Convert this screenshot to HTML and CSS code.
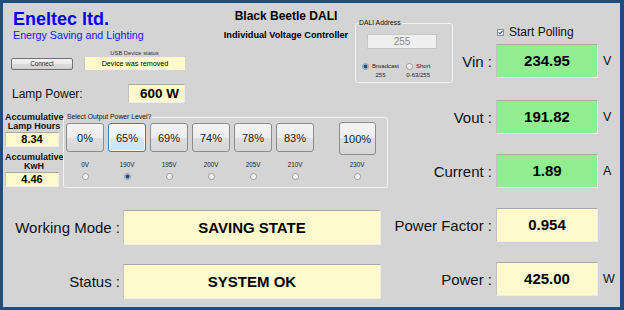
FILE: index.html
```html
<!DOCTYPE html>
<html>
<head>
<meta charset="utf-8">
<link rel="stylesheet" href="styles.css">
</head>
<body>
<div class="frame">
  <div class="top">
    <div class="brand">
      <div class="brand-name">Eneltec ltd.</div>
      <div class="brand-sub">Energy Saving and Lighting</div>
      <div class="usb-row">
        <button class="btn-connect">Connect</button>
        <div class="usb">
          <div class="usb-label">USB Device status</div>
          <div class="usb-box">Device was removed</div>
        </div>
      </div>
    </div>
    <div class="title">
      <div class="title-main">Black Beetle DALI</div>
      <div class="title-sub">Individual Voltage Controller</div>
    </div>
    <fieldset class="dali">
      <legend>DALI Address</legend>
      <div class="dali-input">255</div>
      <div class="dali-opts">
        <div class="opt opt-b">
          <div class="opt-line"><span class="radio checked"></span><span>Broadcast</span></div>
          <div class="opt-sub">255</div>
        </div>
        <div class="opt opt-s">
          <div class="opt-line"><span class="radio"></span><span>Short</span></div>
          <div class="opt-sub">0-63/255</div>
        </div>
      </div>
    </fieldset>
    <div class="top-right">
      <div class="polling">
        <span class="check"><svg width="5" height="5" viewBox="0 0 5 5"><path d="M0.5 2.3 L2 3.8 L4.6 0.8" fill="none" stroke="#2b4f8f" stroke-width="1.1"/></svg></span>
        <span>Start Polling</span>
      </div>
      <div class="meas">
        <span class="m-label">Vin :</span>
        <div class="vbox green">234.95</div>
        <span class="unit">V</span>
      </div>
    </div>
  </div>

  <div class="main">
    <div class="left">
      <div class="lamp">
        <span class="lamp-label">Lamp Power:</span>
        <div class="vbox yellow lamp-box">600 W</div>
      </div>
      <div class="mid">
        <div class="accum">
          <div class="acc-title">Accumulative<br>Lamp Hours</div>
          <div class="vbox yellow acc-box">8.34</div>
          <div class="acc-title acc-second">Accumulative<br>KwH</div>
          <div class="vbox yellow acc-box">4.46</div>
        </div>
        <fieldset class="power">
          <legend>Select Output Power Level?</legend>
          <div class="levels">
            <div class="lvl"><button class="pbtn">0%</button><span class="volt">0V</span><span class="radio"></span></div>
            <div class="lvl"><button class="pbtn focus">65%</button><span class="volt">190V</span><span class="radio checked"></span></div>
            <div class="lvl"><button class="pbtn">69%</button><span class="volt">195V</span><span class="radio"></span></div>
            <div class="lvl"><button class="pbtn">74%</button><span class="volt">200V</span><span class="radio"></span></div>
            <div class="lvl"><button class="pbtn">78%</button><span class="volt">205V</span><span class="radio"></span></div>
            <div class="lvl"><button class="pbtn">83%</button><span class="volt">210V</span><span class="radio"></span></div>
            <div class="lvl lvl-max"><button class="pbtn big">100%</button><span class="volt">230V</span><span class="radio"></span></div>
          </div>
        </fieldset>
      </div>
      <div class="mode first">
        <span class="mode-label">Working Mode :</span>
        <div class="vbox yellow mode-box">SAVING STATE</div>
      </div>
      <div class="mode">
        <span class="mode-label">Status :</span>
        <div class="vbox yellow mode-box">SYSTEM OK</div>
      </div>
    </div>

    <div class="right">
      <div class="meas">
        <span class="m-label">Vout :</span>
        <div class="vbox green">191.82</div>
        <span class="unit">V</span>
      </div>
      <div class="meas">
        <span class="m-label">Current :</span>
        <div class="vbox green">1.89</div>
        <span class="unit">A</span>
      </div>
      <div class="meas">
        <span class="m-label">Power Factor :</span>
        <div class="vbox yellow">0.954</div>
        <span class="unit"></span>
      </div>
      <div class="meas">
        <span class="m-label">Power :</span>
        <div class="vbox yellow">425.00</div>
        <span class="unit">W</span>
      </div>
    </div>
  </div>
</div>
</body>
</html>
```

FILE: styles.css
```css
* { box-sizing: border-box; }

body {
  margin: 0;
  font-family: "Liberation Sans", Arial, sans-serif;
  color: #000;
}

.frame {
  width: 624px;
  height: 310px;
  background: #d4d4d4;
  border: 3px solid #1e4e7d;
  border-right-width: 4px;
  display: flex;
  flex-direction: column;
}

/* ---------- top band ---------- */
.top {
  height: 81px;
  display: flex;
  align-items: flex-start;
  flex-shrink: 0;
}

.brand {
  width: 200px;
  padding: 6px 0 0 10px;
}

.brand-name {
  font-size: 18px;
  font-weight: bold;
  line-height: 20px;
  color: #0000f2;
}

.brand-sub {
  font-size: 10.7px;
  line-height: 13px;
  color: #1414ff;
}

.usb-row {
  display: flex;
  align-items: flex-end;
  gap: 11px;
  margin: 8px 0 0 -2px;
}

.btn-connect {
  width: 62px;
  height: 12px;
  padding: 0;
  border: 1px solid #707070;
  border-radius: 2px;
  background: linear-gradient(#f3f3f3, #ebebeb 50%, #dddddd 50%, #cfcfcf);
  font-family: "Liberation Sans", Arial, sans-serif;
  font-size: 6.3px;
  line-height: 10px;
  color: #222;
}

.usb {
  width: 101px;
  display: flex;
  flex-direction: column;
  align-items: center;
}

.usb-label {
  font-size: 5.8px;
  line-height: 7px;
  color: #333;
}

.usb-box {
  width: 100%;
  height: 13px;
  background: #fffacd;
  border-left: 1px solid #c4c4c4;
  font-size: 7.2px;
  line-height: 13px;
  text-align: center;
}

.title {
  width: 152px;
  padding: 6px 0 0 14px;
  text-align: center;
}

.title-main {
  font-size: 12px;
  font-weight: bold;
  line-height: 14px;
}

.title-sub {
  font-size: 9.2px;
  font-weight: bold;
  line-height: 11px;
  margin-top: 6.5px;
}

/* group boxes */
fieldset {
  margin: 0;
  padding: 0;
  min-width: 0;
  border: 1px solid #f2f2f2;
  border-radius: 3px;
}

legend {
  padding: 0 1px;
  margin-left: 2px;
  font-size: 6.8px;
  line-height: 8px;
  color: #111;
}

.dali {
  width: 98px;
  margin-top: 16px;
  padding-bottom: 3px;
}

.dali-input {
  width: 70px;
  height: 15px;
  margin: 7px 0 0 11px;
  background: #efefef;
  border: 1px solid #c6c6c6;
  font-size: 10px;
  line-height: 13px;
  text-align: center;
  color: #8a8a8a;
}

.dali-opts {
  display: flex;
  gap: 7px;
  margin: 13px 0 0 6px;
}

.opt {
  display: flex;
  flex-direction: column;
  align-items: center;
  font-size: 6px;
  color: #222;
}

.opt-line {
  display: flex;
  align-items: center;
  gap: 3px;
  height: 8px;
}

.opt-sub {
  line-height: 8px;
  margin-top: 1px;
}

.top-right {
  flex: 1;
  padding-top: 22px;
}

.polling {
  display: flex;
  align-items: center;
  gap: 5px;
  padding-left: 44px;
  font-size: 12px;
  line-height: 14px;
  color: #111;
}

.check {
  width: 7px;
  height: 7px;
  border: 1px solid #8f8f8f;
  background: #f4f4f4;
  display: flex;
  align-items: center;
  justify-content: center;
}

.top-right .meas {
  margin-top: 5px;
}

/* measurement rows */
.meas {
  display: flex;
  align-items: center;
}

.m-label {
  flex: 1;
  text-align: right;
  padding-right: 4px;
  font-size: 15px;
  white-space: nowrap;
  color: #111;
}

.vbox {
  border-top: 1px solid #a9a9a9;
  border-left: 1px solid #c2c2c2;
  border-right: 1px solid #ececec;
  border-bottom: 1px solid #ececec;
  font-weight: bold;
  text-align: center;
  color: #000;
}

.meas .vbox {
  width: 102px;
  height: 34px;
  line-height: 32px;
  font-size: 15px;
}

.green { background: #90ee90; }
.yellow { background: #fffacd; }

.unit {
  width: 22px;
  padding-left: 5px;
  font-size: 12.5px;
  color: #111;
}

/* ---------- main band ---------- */
.main {
  flex: 1;
  display: flex;
}

.left {
  width: 387px;
}

.right {
  flex: 1;
  padding-top: 16px;
  display: flex;
  flex-direction: column;
  gap: 20px;
}

.lamp {
  height: 19px;
  display: flex;
  align-items: center;
  padding-left: 9px;
}

.lamp-label {
  width: 116px;
  font-size: 12px;
  color: #111;
}

.lamp-box {
  width: 57px;
  height: 19px;
  font-size: 13.5px;
  line-height: 17px;
  padding-left: 6px;
}

.mid {
  display: flex;
  align-items: flex-start;
  margin-top: 10px;
}

.accum {
  width: 54px;
  margin-left: 2px;
  text-align: center;
}

.acc-title {
  font-size: 9px;
  font-weight: bold;
  line-height: 9px;
  color: #111;
  margin-right: -4px;
}

.acc-second {
  margin-top: 5.5px;
}

.acc-box {
  height: 15px;
  margin-top: 1px;
  font-size: 11px;
  line-height: 13px;
}

.power {
  width: 325px;
  margin-left: 4px;
  padding-bottom: 7px;
}

.levels {
  display: flex;
  margin-top: 1px;
}

.lvl {
  width: 42px;
  display: flex;
  flex-direction: column;
  align-items: center;
}

.lvl-max {
  margin-left: 20px;
}

.pbtn {
  width: 38px;
  height: 29px;
  margin: 1px 0 3px;
  padding: 0;
  border: 1px solid #8c8c8c;
  border-radius: 3px;
  background: linear-gradient(#f4f4f4, #ececec 50%, #dfdfdf 50%, #d6d6d6);
  font-family: "Liberation Sans", Arial, sans-serif;
  font-size: 11px;
  color: #222;
}

.pbtn.focus {
  border-color: #3c7fb1;
  box-shadow: inset 0 0 0 1px #f4fbff;
  background: linear-gradient(#f2f8fd, #e8f2fa 50%, #d8e8f4 50%, #d0e2f0);
}

.pbtn.big {
  width: 37px;
  height: 33px;
  margin: 0;
}

.volt {
  font-size: 6.3px;
  line-height: 8px;
  margin-top: 6.4px;
  color: #222;
}

.lvl .radio {
  margin-top: 3.8px;
}

.radio {
  width: 7px;
  height: 7px;
  border: 1px solid #9a9a9a;
  border-radius: 50%;
  background: radial-gradient(circle, #e9e9e9 0, #fbfbfb 70%);
  display: inline-block;
  flex-shrink: 0;
}

.radio.checked {
  background: radial-gradient(circle, #1b4f8c 0, #1b4f8c 1.4px, #8fb3da 2.2px, #f0f0f0 2.8px);
}

.mode {
  display: flex;
  align-items: center;
  margin-top: 19px;
}

.mode.first {
  margin-top: 21.5px;
}

.mode-label {
  width: 117px;
  text-align: right;
  font-size: 15px;
  color: #111;
}

.mode-box {
  width: 258px;
  height: 35px;
  margin-left: 3px;
  font-size: 15px;
  line-height: 33px;
}
```
